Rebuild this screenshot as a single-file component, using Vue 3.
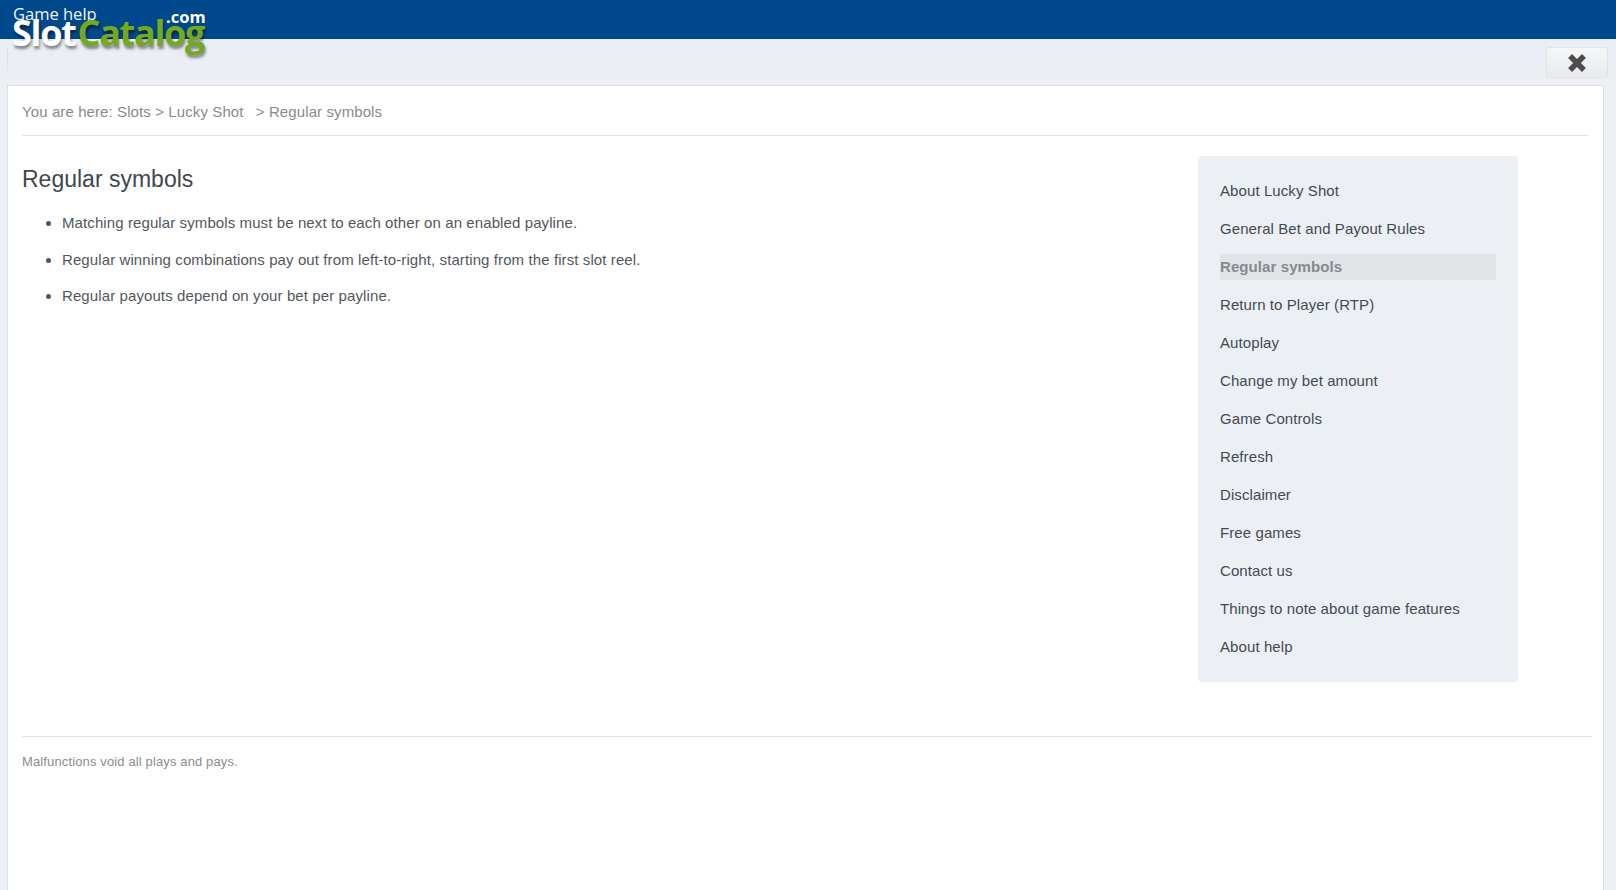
<template>
  <div class="page">
    <header class="topbar"></header>
    <div class="logo">
      <span class="game-help">Game help</span>
      <span class="dotcom">.com</span>
      <span class="wordmark"><span class="slot">Slot</span><span class="catalog">Catalog</span></span>
    </div>
    <div class="toolbar">
      <span class="tool-sep"></span>
      <button class="close-btn" aria-label="Close">
        <svg width="20" height="20" viewBox="0 0 18 18"><path d="M4.500 1 9 5.500 13.500 1 17 4.500 12.500 9 17 13.500 13.500 17 9 12.500 4.500 17 1 13.500 5.500 9 1 4.500Z" fill="#4d4d4d"/></svg>
      </button>
    </div>
    <main class="content">
      <div class="breadcrumb">You are here: Slots &gt; Lucky Shot <span class="crumb-last">&gt; Regular symbols</span></div>
      <div class="columns">
        <article class="article">
          <h1>Regular symbols</h1>
          <ul>
            <li v-for="item in points" :key="item">{{ item }}</li>
          </ul>
        </article>
        <nav class="side">
          <a v-for="link in links" :key="link" class="side-link" :class="{ active: link === current }">{{ link }}</a>
        </nav>
      </div>
      <footer class="foot">Malfunctions void all plays and pays.</footer>
    </main>
  </div>
</template>

<script setup>
const current = 'Regular symbols'

const points = [
  'Matching regular symbols must be next to each other on an enabled payline.',
  'Regular winning combinations pay out from left-to-right, starting from the first slot reel.',
  'Regular payouts depend on your bet per payline.',
]

const links = [
  'About Lucky Shot',
  'General Bet and Payout Rules',
  'Regular symbols',
  'Return to Player (RTP)',
  'Autoplay',
  'Change my bet amount',
  'Game Controls',
  'Refresh',
  'Disclaimer',
  'Free games',
  'Contact us',
  'Things to note about game features',
  'About help',
]
</script>

<style>
html, body { margin: 0; background: #fff; overflow: hidden; }
</style>

<style scoped>
.page {
  position: relative;
  height: 890px;
  background: linear-gradient(#e9eef5 39px, #edf0f4 90px);
  font-family: "Liberation Sans", Arial, sans-serif;
  overflow: hidden;
}
.topbar {
  height: 39px;
  background: #00488c;
}
.logo {
  position: absolute;
  left: 12px;
  top: 2px;
  width: 200px;
  height: 56px;
}
.game-help {
  position: absolute;
  left: 1px;
  top: 2px;
  font-family: "Open Sans", sans-serif;
  font-size: 16.500px;
  line-height: 20px;
  color: #f2f5f8;
}
.dotcom {
  position: absolute;
  left: 154px;
  top: 6px;
  font-family: "Open Sans", sans-serif;
  font-weight: 700;
  font-size: 16.500px;
  line-height: 18px;
  color: #fff;
}
.wordmark {
  position: absolute;
  left: 0;
  top: 12px;
  font-family: "Open Sans", sans-serif;
  font-weight: 700;
  font-size: 36px;
  line-height: 38px;
  letter-spacing: -1.300px;
  white-space: nowrap;
  text-shadow: 1px 3px 3px rgba(0, 0, 0, 0.45);
}
.slot { color: #fff; margin-right: 2px; }
.catalog { color: #74a81f; }
.toolbar {
  height: 46px;
  display: flex;
  justify-content: flex-end;
  align-items: flex-start;
  padding: 8px 8px 0 7px;
  box-sizing: border-box;
}
.tool-sep {
  width: 1px;
  height: 22px;
  margin-top: 1px;
  background: #dfe3e8;
  margin-right: auto;
}
.close-btn {
  width: 62px;
  height: 31px;
  padding: 0;
  display: flex;
  align-items: center;
  justify-content: center;
  background: linear-gradient(#f5f6f8, #e8eaed);
  border: 1px solid #e0e2e5;
  border-radius: 2px;
}
.content {
  margin: 0 12px 0 7px;
  height: 805px;
  box-sizing: border-box;
  padding: 0 15px 0 14px;
  background: #fff;
  border-top: 1px solid #dcdfe3;
  border-left: 1px solid #dcdfe3;
  border-right: 1px solid #dcdfe3;
}
.breadcrumb {
  height: 49px;
  line-height: 52px;
  font-size: 15px;
  letter-spacing: 0.100px;
  color: #8a8a8a;
  border-bottom: 1px solid #e2e2e2;
  white-space: pre-wrap;
}
.crumb-last { margin-left: 8px; }
.columns {
  display: flex;
  justify-content: space-between;
  height: 601px;
  padding-top: 20px;
  box-sizing: border-box;
  border-bottom: 1px solid #e2e2e2;
  margin-right: -4px;
}
.article { flex: 1; }
h1 {
  margin: 9px 0 0;
  font-size: 23px;
  line-height: 28px;
  font-weight: 400;
  color: #41474e;
}
ul {
  margin: 21px 0 0;
  padding: 0 0 0 40px;
}
li {
  font-size: 15px;
  line-height: 18px;
  letter-spacing: 0.100px;
  color: #52575d;
  margin-bottom: 18.500px;
}
.side {
  width: 320px;
  height: 526px;
  margin-right: 74px;
  box-sizing: border-box;
  padding: 22px;
  display: flex;
  flex-direction: column;
  gap: 12px;
  background: #ecf0f5;
  border-radius: 4px;
}
.side-link {
  height: 26px;
  line-height: 26px;
  font-size: 15px;
  letter-spacing: 0.090px;
  color: #444a51;
}
.side-link.active {
  font-weight: 700;
  color: #858a90;
  background: #e1e3e7;
}
.foot {
  margin-top: 16px;
  font-size: 13px;
  line-height: 18px;
  letter-spacing: 0.130px;
  color: #8a8c8f;
}
</style>
